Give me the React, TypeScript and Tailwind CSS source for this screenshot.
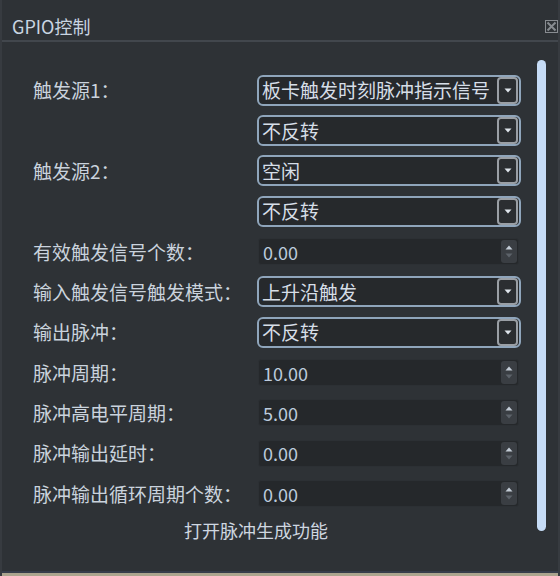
import React from "react";

const font = { fontFamily: '"Noto Sans CJK SC", "Noto Sans", sans-serif' };

function Combo({ text }: { text: string }) {
  return (
    <div className="w-[264px] h-[31px] rounded-[6px] border-2 border-[#8fa5bb] bg-[#26292c] flex items-center">
      <span className="pl-[3px] text-[19px] leading-[24px] text-[#d6dee7] flex-1 whitespace-nowrap">{text}</span>
      <div className="w-[21px] h-[27px] mr-[1px] rounded-[4px] border-2 border-[#9a9fa5] bg-[#2b2e31] flex items-center justify-center shrink-0">
        <svg width="8" height="5" viewBox="0 0 8 5">
          <path d="M0.5 0.5 L7.5 0.5 L4 4.5 Z" fill="#dfe5ec" />
        </svg>
      </div>
    </div>
  );
}

function Spin({ value }: { value: string }) {
  return (
    <div className="ml-[1px] w-[261px] h-[27px] rounded-[3px] bg-[#25282b] border border-[#2c3034] flex items-center">
      <span className="pl-[4px] text-[18px] leading-[22px] text-[#bccbdd] flex-1">{value}</span>
      <div className="w-[16px] h-[23px] mr-[1px] rounded-[3px] bg-[#3a3e43] flex flex-col items-center justify-center gap-[3px]">
        <svg width="8" height="5" viewBox="0 0 8 5">
          <path d="M0.5 4.5 L7.5 4.5 L4 0.5 Z" fill="#c3ccd6" />
        </svg>
        <svg width="8" height="5" viewBox="0 0 8 5">
          <path d="M0.5 0.5 L7.5 0.5 L4 4.5 Z" fill="#5d636a" />
        </svg>
      </div>
    </div>
  );
}

type Row = { label: string; kind: "combo" | "spin"; value: string };

const rows: Row[] = [
  { label: "触发源1：", kind: "combo", value: "板卡触发时刻脉冲指示信号" },
  { label: "", kind: "combo", value: "不反转" },
  { label: "触发源2：", kind: "combo", value: "空闲" },
  { label: "", kind: "combo", value: "不反转" },
  { label: "有效触发信号个数：", kind: "spin", value: "0.00" },
  { label: "输入触发信号触发模式：", kind: "combo", value: "上升沿触发" },
  { label: "输出脉冲：", kind: "combo", value: "不反转" },
  { label: "脉冲周期：", kind: "spin", value: "10.00" },
  { label: "脉冲高电平周期：", kind: "spin", value: "5.00" },
  { label: "脉冲输出延时：", kind: "spin", value: "0.00" },
  { label: "脉冲输出循环周期个数：", kind: "spin", value: "0.00" },
];

export default function App() {
  return (
    <div style={font} className="w-[560px] h-[576px] bg-[#2e3236] flex flex-col border-x-2 border-[#373b40] overflow-hidden">
      <div className="h-[40px] flex items-center justify-between pt-[12px] pl-[10px] shrink-0">
        <span className="text-[18px] leading-[22px] text-[#c9d5e2]">GPIO控制</span>
        <svg width="13" height="13" viewBox="0 0 13 13" className="block">
          <rect x="0.5" y="0.5" width="12" height="12" fill="none" stroke="#888c91" />
          <path d="M2.5 2.5 L10.5 10.5 M10.5 2.5 L2.5 10.5" stroke="#888c91" strokeWidth="2" />
        </svg>
      </div>
      <div className="h-[2px] bg-[#42474d] shrink-0" />
      <div className="flex flex-1">
        <div className="pl-[31px] pt-[28px] flex flex-col">
          {rows.map((r, i) => (
            <div key={i} className="h-[40.35px] flex items-center">
              <div className="w-[224px] text-[19px] leading-[24px] text-[#cad3dd] whitespace-nowrap">{r.label}</div>
              {r.kind === "combo" ? <Combo text={r.value} /> : <Spin value={r.value} />}
            </div>
          ))}
          <div className="pl-[151px] pt-[5px] text-[18px] leading-[22px] text-[#cfd7e0]">打开脉冲生成功能</div>
        </div>
        <div className="ml-[16px] mt-[18px] w-[9px] h-[471px] rounded-full bg-[#c6dcf6]" />
      </div>
      <div className="h-[2px] bg-[#363c4a] shrink-0" />
      <div className="h-[3px] bg-[#aba48e] shrink-0" />
    </div>
  );
}
